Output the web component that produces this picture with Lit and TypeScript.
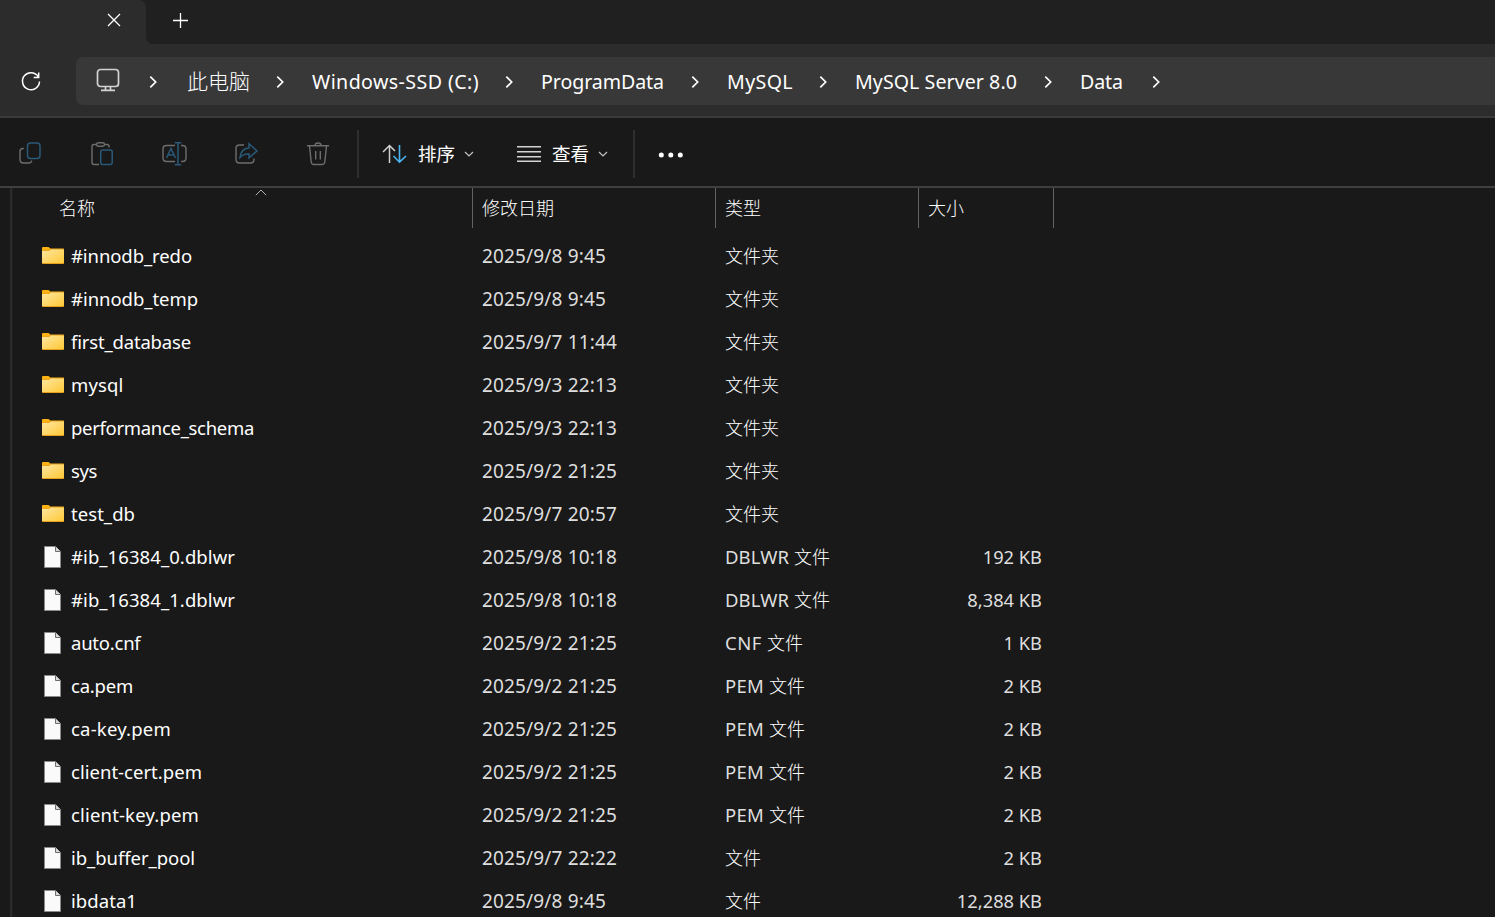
import { LitElement, html, css, svg } from "lit";
import { customElement } from "lit/decorators.js";

// w: cell width up to the next crumb, tw: width of the label itself
const crumbs = [
  { t: "此电脑", w: 125, tw: 63, cjk: true },
  { t: "Windows-SSD (C:)", w: 229, tw: 167 },
  { t: "ProgramData", w: 186, tw: 123 },
  { t: "MySQL", w: 128, tw: 66 },
  { t: "MySQL Server 8.0", w: 225, tw: 162 },
  { t: "Data", w: 108, tw: 43 },
];

interface Row { n: string; w: number; d: string; t: string; s?: string }
const rows: Row[] = [
  { n: "#innodb_redo", w: 121, d: "2025/9/8 9:45", t: "" },
  { n: "#innodb_temp", w: 127, d: "2025/9/8 9:45", t: "" },
  { n: "first_database", w: 120, d: "2025/9/7 11:44", t: "" },
  { n: "mysql", w: 52.5, d: "2025/9/3 22:13", t: "" },
  { n: "performance_schema", w: 183, d: "2025/9/3 22:13", t: "" },
  { n: "sys", w: 26, d: "2025/9/2 21:25", t: "" },
  { n: "test_db", w: 64, d: "2025/9/7 20:57", t: "" },
  { n: "#ib_16384_0.dblwr", w: 164, d: "2025/9/8 10:18", t: "DBLWR", s: "192 KB" },
  { n: "#ib_16384_1.dblwr", w: 164, d: "2025/9/8 10:18", t: "DBLWR", s: "8,384 KB" },
  { n: "auto.cnf", w: 69.5, d: "2025/9/2 21:25", t: "CNF", s: "1 KB" },
  { n: "ca.pem", w: 62, d: "2025/9/2 21:25", t: "PEM", s: "2 KB" },
  { n: "ca-key.pem", w: 100, d: "2025/9/2 21:25", t: "PEM", s: "2 KB" },
  { n: "client-cert.pem", w: 131, d: "2025/9/2 21:25", t: "PEM", s: "2 KB" },
  { n: "client-key.pem", w: 128, d: "2025/9/2 21:25", t: "PEM", s: "2 KB" },
  { n: "ib_buffer_pool", w: 124, d: "2025/9/7 22:22", t: "", s: "2 KB" },
  { n: "ibdata1", w: 66, d: "2025/9/8 9:45", t: "", s: "12,288 KB" },
];
const typeWidths: Record<string, number> = { DBLWR: 69, CNF: 42, PEM: 44 };

const folderIcon = html`<svg class="ico" width="24" height="24" viewBox="0 0 24 24">
  <defs><linearGradient id="g" x1="0" y1="0" x2="1" y2="1"><stop offset="0" stop-color="#ffe7a2"/><stop offset="1" stop-color="#fec937"/></linearGradient></defs>
  <path d="M1 4.200Q1 3 2 3H7.600L9.200 4.600H22.400Q23 4.600 23 5.400V19H1Z" fill="#fbb114"/>
  <path d="M1 6.600H8L9.800 5H22.400Q23 5 23 5.600V19.200Q23 20 22.200 20H1.800Q1 20 1 19.200Z" fill="#e6a01c"/>
  <path d="M1 7H8.200L10 5.400H23V19H1Z" fill="url(#g)"/>
</svg>`;

const fileIcon = html`<svg class="ico" width="24" height="24" viewBox="0 0 24 24">
  <path d="M3.500 1.500H14.500L19.500 6.500V22.500H3.500Z" fill="#fafafa" stroke="#8a8a8a"/>
  <path d="M14.500 1.500V6.500H19.500" fill="#d8d8d8" stroke="#6d6d6d"/>
</svg>`;

const chevron = html`<svg class="chev" width="10" height="14" viewBox="0 0 10 14"><path d="M2.300 1.600L7.700 7L2.300 12.400" fill="none" stroke="#fff" stroke-width="1.700"/></svg>`;
const down = html`<svg class="down" width="10" height="8" viewBox="0 0 10 8"><path d="M1 2L5 6L9 2" fill="none" stroke="#c4c4c4" stroke-width="1.200"/></svg>`;

const tools = [
  svg`<path class="g" d="M5.800 6.500H5Q2 6.500 2 9.500V17.500Q2 21 5.500 21H10.500Q13.200 21 13.700 18.600"/><rect class="b" x="9.500" y="1" width="12.500" height="15.500" rx="3"/>`,
  svg`<path class="g" d="M6 2.500H4Q2 2.500 2 4.500V20.500Q2 22.500 4 22.500H9M15 2.500H17Q19 2.500 19 4.500V5.500"/><rect class="g" x="6.500" y="0.800" width="8" height="3.400" rx="1.700"/><rect class="b" x="10.700" y="8" width="11.500" height="14.500" rx="2"/>`,
  svg`<path class="g" d="M13 3.500H4.500Q1 3.500 1 7V16Q1 19.500 4.500 19.500H13M19 3.500H20.500Q24 3.500 24 7V16Q24 19.500 20.500 19.500H19"/><path class="b" d="M4.500 16L9 6.500L13.500 16M6 13H12M16 1V22.500M12.800 0.800H19.200M12.800 22.700H19.200"/>`,
  svg`<path class="g" d="M10 3H5.500Q2 3 2 6.500V17.500Q2 21 5.500 21H16.500Q20 21 20 17.500V16.500"/><path class="b" d="M15 1.800L23 9L15 15.800V12Q9.500 11.500 6 15.500Q7 6.500 15 6Z"/>`,
  svg`<path class="g" d="M1 3.700H23M3.500 4L5.200 20Q5.500 22.500 8 22.500H16Q18.500 22.500 18.800 20L20.500 4M9 3.500Q9 1 12 1Q15 1 15 3.500M9.700 9V17.500M14.300 9V17.500"/>`,
];

@customElement("app-root")
export class AppRoot extends LitElement {
  static styles = css`
    :host { display: block; width: 1495px; height: 917px; overflow: hidden; background: #191919; color: #fff;
      font-family: "Noto Sans", "Noto Sans CJK SC", sans-serif; }
    * { box-sizing: border-box; }
    svg { display: block; flex: none; }
    .tabs { height: 44px; display: flex; background: #2c2c2c; }
    .tabwrap { background: #202020; display: flex; }
    .tab { width: 146px; padding: 13px 0 0 107px; background: #2c2c2c; border-radius: 0 7px 0 0; }
    .tabrest { flex: 1; background: #202020; border-radius: 0 0 0 7px; padding: 13px 0 0 27px; }
    .nav { height: 72px; background: #2c2c2c; display: flex; align-items: flex-start; padding-top: 13px; }
    .refresh { margin: 13px 0 0 20px; width: 56px; }
    .addr { flex: 1; height: 48px; background: #383838; border-radius: 7px 0 0 7px; display: flex; align-items: center; }
    .pc { margin: 0 28px 2px 20px; }
    .crumb { display: flex; align-items: center; justify-content: space-between; height: 48px; padding-left: 29px; margin-right: -2px; }
    .root .chev, .crumb .chev { margin-top: 2px; }
    .ct { font-size: 19.6px; white-space: nowrap; line-height: 49px; }
    .cjk { font-family: "Noto Sans CJK SC", sans-serif; font-size: 21px; line-height: 46px; margin-top: -2px; font-weight: 300; }
    .bar { height: 72px; border-top: 2px solid #3a3a3a; border-bottom: 2px solid #3f3f3f; display: flex; align-items: center; padding: 4px 0 0 18px; }
    .tool { width: 72px; }
    .g { fill: none; stroke: #6d6d6d; stroke-width: 1.4; }
    .b { fill: none; stroke: #2a5a78; stroke-width: 1.5; }
    .sep { width: 2px; height: 48px; background: #2e2e2e; }
    .first { margin-left: -21px; }
    .lab { font-size: 18.5px; line-height: 24px; margin: -2px 9px 0 10px; font-family: "Noto Sans CJK SC", sans-serif; }
    .sort { margin-left: 23px; }
    .sort + .lab { margin-left: 11px; }
    .view { margin-left: 43px; }
    .view + .lab { margin-left: 11px; }
    .second { margin-left: 25px; }
    .dots { margin: 2px 0 0 23px; }
    .main { display: flex; height: 729px; }
    .split { width: 13px; flex: none; display: flex; padding-left: 10px; }
    .line { width: 3px; background: #2b2b2b; border-right: 1px solid #1f1f1f; }
    .list { width: 1041px; }
    .row, .head { display: grid; grid-template-columns: 460px 243px 203px 135px; }
    .head { height: 40px; font-size: 18px; line-height: 39px; font-family: "Noto Sans CJK SC", sans-serif; font-weight: 300; color: #fff; }
    .h { border-right: 1px solid #636363; padding-left: 9px; height: 40px; }
    .name { padding-left: 46px; display: flex; }
    .up { margin: 1px 0 0 160px; }
    .rows { padding-top: 7px; }
    .row { height: 43px; line-height: 41px; font-size: 18.5px; color: #dedede; white-space: nowrap; }
    .c { padding-left: 9px; }
    .date { font-size: 19px; line-height: 43px; }
    .zh { font-family: "Noto Sans CJK SC", sans-serif; font-size: 18px; font-weight: 300; color: #fff; line-height: 40px; }
    .type { display: flex; }
    .n { display: flex; align-items: flex-start; padding-left: 28px; gap: 6px; color: #fff; }
    .ico { margin-top: 9px; }
    .s { text-align: right; padding-right: 12px; font-size: 18.3px; }
  `;

  firstUpdated() {
    this.renderRoot.querySelectorAll<HTMLElement>("[data-w]").forEach((el) => {
      const natural = el.getBoundingClientRect().width;
      const count = (el.textContent ?? "").length;
      if (natural && count) el.style.letterSpacing = `${((Number(el.dataset.w) - natural) / count).toFixed(3)}px`;
    });
  }

  render() {
    return html`
      <div class="tabs">
        <div class="tabwrap"><div class="tab"><svg width="14" height="14" viewBox="0 0 14 14"><path d="M1 1L13 13M13 1L1 13" stroke="#fff" stroke-width="1.300"/></svg></div></div>
        <div class="tabrest"><svg width="15" height="15" viewBox="0 0 15 15"><path d="M0 7.500H15M7.500 0V15" stroke="#fff" stroke-width="1.300"/></svg></div>
      </div>
      <div class="nav">
        <div class="refresh"><svg width="22" height="22" viewBox="0 0 22 22"><path d="M18.400 7A8.500 8.500 0 1 0 19.500 11.500M18.700 2.500V7.500H13.700" fill="none" stroke="#fff" stroke-width="1.500"/></svg></div>
        <div class="addr">
          <svg class="pc" width="24" height="24" viewBox="0 0 24 24"><g fill="none" stroke="#d2d2d2" stroke-width="1.700"><rect x="1.500" y="1.500" width="21" height="17" rx="3"/><path d="M9.500 18.500V22M14.500 18.500V22M5 22.300H19"/></g></svg>
          <div class="root">${chevron}</div>
          ${crumbs.map((c) => html`<div class="crumb" style="width:${c.w + 2}px"><span class="ct ${c.cjk ? "cjk" : ""}" data-w=${c.tw}>${c.t}</span>${chevron}</div>`)}
        </div>
      </div>
      <div class="bar">
        ${tools.map((t) => html`<div class="tool"><svg width="25" height="24" viewBox="0 0 25 24">${t}</svg></div>`)}
        <div class="sep first"></div>
        <svg class="sort" width="25" height="20" viewBox="0 0 25 20"><path d="M1 8L7.500 1.500L13 7M7.500 2V19" fill="none" stroke="#d0d0d0" stroke-width="1.500"/><path d="M17.500 1V18.500M11.500 12L17.500 18.200L24 12" fill="none" stroke="#4cb5f0" stroke-width="1.600"/></svg>
        <span class="lab">排序</span>${down}
        <svg class="view" width="24" height="18" viewBox="0 0 24 18"><path d="M0 1.700H24M0 6.700H24M0 11.700H24M0 16.300H24" stroke="#d4d4d4" stroke-width="1.500"/></svg>
        <span class="lab">查看</span>${down}
        <div class="sep second"></div>
        <svg class="dots" width="26" height="6" viewBox="0 0 26 6"><circle cx="3.300" cy="3" r="2.500" fill="#fff"/><circle cx="12.800" cy="3" r="2.500" fill="#fff"/><circle cx="22.300" cy="3" r="2.500" fill="#fff"/></svg>
      </div>
      <div class="main">
        <div class="split"><div class="line"></div></div>
        <div class="list">
          <div class="head">
            <div class="h name">名称<svg class="up" width="12" height="7" viewBox="0 0 12 7"><path d="M0.800 6.200L6 1L11.200 6.200" fill="none" stroke="#b0b0b0"/></svg></div>
            <div class="h">修改日期</div><div class="h">类型</div><div class="h">大小</div>
          </div>
          <div class="rows">
            ${rows.map((r) => html`<div class="row">
              <div class="n">${r.s ? fileIcon : folderIcon}<span data-w=${r.w}>${r.n}</span></div>
              <div class="c date"><span data-w=${r.d.length === 13 ? 124 : 135}>${r.d}</span></div>
              <div class="c type">${r.t ? html`<span data-w=${typeWidths[r.t]}>${r.t}&nbsp;</span>` : ""}<span class="zh">${r.s ? "文件" : "文件夹"}</span></div>
              <div class="s">${r.s ?? ""}</div>
            </div>`)}
          </div>
        </div>
      </div>`;
  }
}
